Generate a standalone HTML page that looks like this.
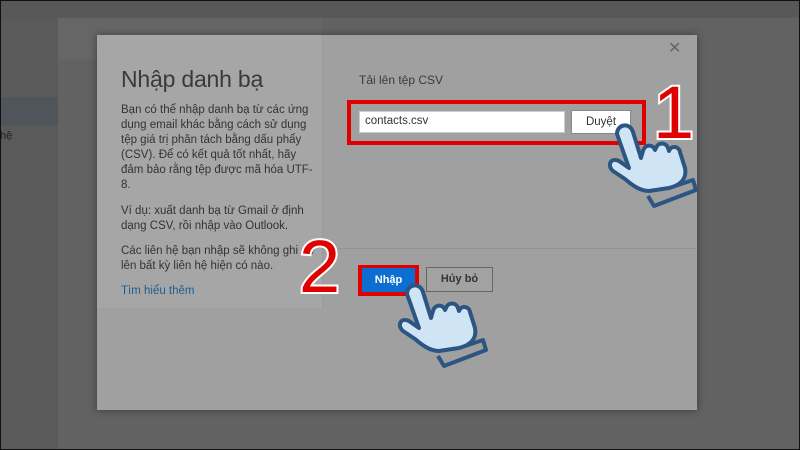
<!DOCTYPE html>
<html><head><meta charset="utf-8"><style>
*{margin:0;padding:0;box-sizing:border-box}
body{width:800px;height:450px;overflow:hidden;background:#5e5e5e;font-family:"Liberation Sans",sans-serif;position:relative}
.abs{position:absolute}
.t{white-space:nowrap}
</style></head><body>
<div class="abs" style="left:0;top:0;width:800px;height:18px;background:#585858"></div>
<div class="abs" style="left:0;top:18px;width:58px;height:432px;background:#5a5a5a"></div>
<div class="abs" style="left:58px;top:18px;width:742px;height:432px;background:#626262"></div>
<div class="abs" style="left:58px;top:18px;width:264px;height:42px;background:#666"></div>
<div class="abs" style="left:0;top:97px;width:58px;height:28px;background:#4f555b"></div>
<div class="abs" style="left:0;top:130px;font-size:11px;color:#222">hệ</div>
<div class="abs" style="left:0;top:0;width:800px;height:450px;border:1px solid #111"></div>

<div class="abs" style="left:97px;top:35px;width:600px;height:375px;background:#a0a0a0;box-shadow:0 0 8px rgba(0,0,0,.4)"></div>
<div class="abs" style="left:97px;top:35px;width:226px;height:273px;background:#a6a6a6;border-right:1px solid #9a9a9a"></div>
<div class="abs" style="left:323px;top:248px;width:374px;height:1px;background:#939393"></div>

<div class="abs" style="left:121px;top:66px;font-size:23px;color:#3a3a3a;letter-spacing:-.2px">Nhập danh bạ</div>
<div class="abs t" style="left:121px;top:103px;font-size:11.5px;line-height:15px;color:#333">Bạn có thể nhập danh bạ từ các ứng<br>dụng email khác bằng cách sử dụng<br>tệp giá trị phân tách bằng dấu phẩy<br>(CSV). Để có kết quả tốt nhất, hãy<br>đảm bảo rằng tệp được mã hóa UTF-<br>8.</div>
<div class="abs t" style="left:121px;top:204px;font-size:11.5px;line-height:15px;color:#333">Ví dụ: xuất danh bạ từ Gmail ở định<br>dạng CSV, rồi nhập vào Outlook.</div>
<div class="abs t" style="left:121px;top:244px;font-size:11.5px;line-height:15px;color:#333">Các liên hệ bạn nhập sẽ không ghi đè<br>lên bất kỳ liên hệ hiện có nào.</div>
<div class="abs" style="left:121px;top:285px;font-size:11.5px;color:#1d5c8e">Tìm hiểu thêm</div>

<div class="abs" style="left:668px;top:38px;font-size:16px;color:#666">✕</div>
<div class="abs" style="left:359px;top:73px;font-size:12px;color:#3a3a3a">Tải lên tệp CSV</div>

<div class="abs" style="left:347px;top:100px;width:299px;height:45px;border:4px solid #e00000"></div>
<div class="abs" style="left:359px;top:111px;width:206px;height:22px;background:#fff;border:1px solid #ccc;font-size:11.5px;color:#333;padding:3px 5px">contacts.csv</div>
<div class="abs" style="left:571px;top:110px;width:60px;height:24px;background:#fff;border:1px solid #888;font-size:11.5px;color:#333;text-align:center;line-height:22px">Duyệt</div>

<div class="abs" style="left:358px;top:265px;width:61px;height:31px;background:#e00000"></div>
<div class="abs" style="left:362px;top:268px;width:53px;height:24px;background:#0b6ed0;color:#fff;font-size:11px;font-weight:bold;text-align:center;line-height:24px">Nhập</div>
<div class="abs" style="left:426px;top:267px;width:67px;height:25px;border:1px solid #666;background:#a2a2a2;color:#333;font-size:11px;font-weight:bold;text-align:center;line-height:23px">Hủy bỏ</div>

<svg class="abs" style="left:0;top:0" width="800" height="450">
<g font-family="Liberation Sans,sans-serif" font-size="74" fill="#e00000" stroke="#fff" stroke-width="4" paint-order="stroke">
<text x="653" y="138">1</text><text x="299" y="292">2</text></g>
<g id="h" stroke="#2d5581" stroke-width="4" fill="#cfe4f5" stroke-linejoin="round">
<path d="M617,134 C617,124 630,122 633,132 L641,158 L643,151 C645,144 653,144 655,150 L656,148 C658,142 666,142 668,148 L669,151 C671,145 679,146 680,152 L685,168 C687,178 681,185 669,188 L649,191 C640,191 632,185 625,179 L613,171 C607,166 610,157 619,161 L629,168 Z"/>
<path d="M675,186 L693,180 L696,190 L654,206 L648,196" fill="none"/>
</g>
<use href="#h" transform="translate(-210,160)"/>
</svg>
</body></html>
